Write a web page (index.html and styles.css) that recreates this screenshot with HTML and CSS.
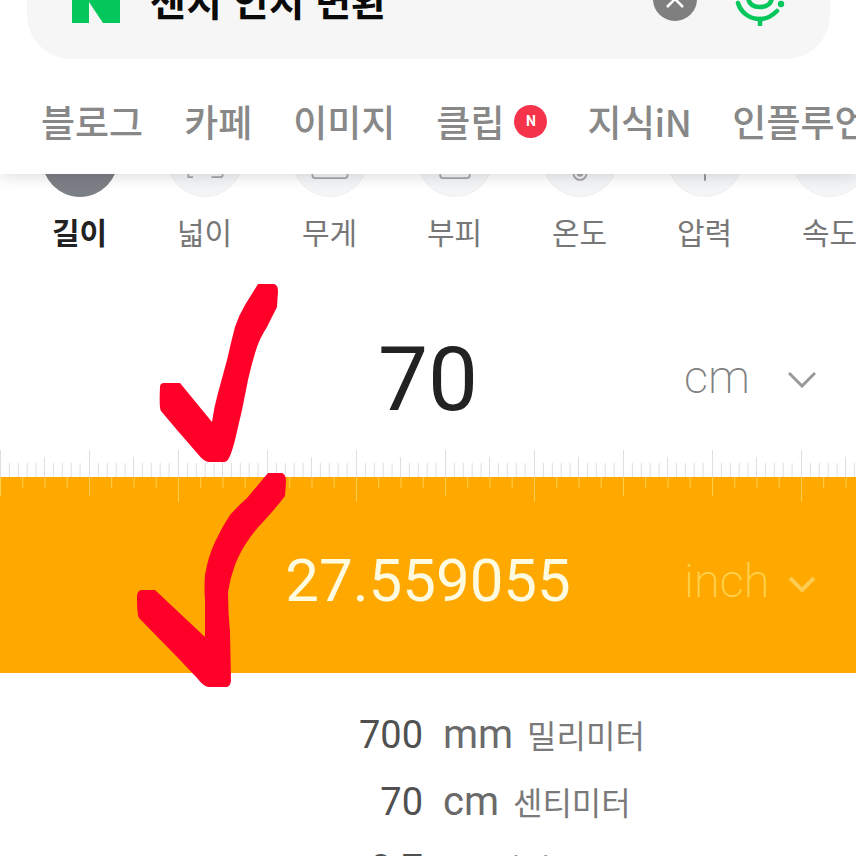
FILE: index.html
```html
<!DOCTYPE html>
<html lang="ko">
<head>
    <meta charset="UTF-8">
    <meta name="viewport" content="width=device-width, initial-scale=1.0">
    <title>센치 인치 변환</title>
    <link rel="stylesheet" href="styles.css">
</head>
<body>

<div class="page">
    <header class="header">
        <div class="search">
            <svg class="logo" viewBox="0 0 48 48"><path fill="#03c75a" d="M0 0h17l14 21V0h17v48H31L17 27v21H0z"/></svg>
            <span class="query">센치 인치 변환</span>
            <span class="clear">
                <svg viewBox="0 0 44 44"><path d="M22 22l-8 8M22 22l8 8M14 14l8 8 8-8" fill="none" stroke="#fff" stroke-width="2.5"/></svg>
            </span>
            <svg class="mic" viewBox="0 0 56 64">
                <g fill="none" stroke="#03c75a" stroke-width="4.5" stroke-linecap="round">
                    <path d="M16 36C17 42 21 45 28 45 35 45 39 42 40 36"/>
                    <path d="M6 41C9 51 18 57 28 57 34 57 40 54 45 49"/>
                    <path d="M28 57v6"/>
                </g>
                <circle cx="49" cy="42" r="3.2" fill="#03c75a"/>
            </svg>
        </div>
        <nav class="tabs">
            <span>블로그</span>
            <span>카페</span>
            <span>이미지</span>
            <span class="tab-clip">클립 <i class="badge">N</i></span>
            <span class="tab-kin">지식iN</span>
            <span>인플루언서</span>
        </nav>
    </header>

    <div class="kinds">
        <div class="kind active">
            <div class="thumb"><div class="circle"></div></div>
            <span>길이</span>
        </div>
        <div class="kind">
            <div class="thumb"><div class="circle">
                <svg viewBox="0 0 80 23"><path d="M22 0v3h5M47 3h10a2 2 0 0 0 2-2V0" fill="none" stroke="#a5a5a8" stroke-width="2"/></svg>
            </div></div>
            <span>넓이</span>
        </div>
        <div class="kind">
            <div class="thumb"><div class="circle">
                <svg viewBox="0 0 80 23"><path d="M21 0v1a3 3 0 0 0 3 3h32a3 3 0 0 0 3-3V0" fill="none" stroke="#a5a5a8" stroke-width="2"/></svg>
            </div></div>
            <span>무게</span>
        </div>
        <div class="kind">
            <div class="thumb"><div class="circle">
                <svg viewBox="0 0 80 23"><path d="M24 0v1a3 3 0 0 0 3 3h26a3 3 0 0 0 3-3V0" fill="none" stroke="#a5a5a8" stroke-width="2"/></svg>
            </div></div>
            <span>부피</span>
        </div>
        <div class="kind">
            <div class="thumb"><div class="circle">
                <svg viewBox="0 0 80 23"><circle cx="40" cy="-1" r="7" fill="none" stroke="#a5a5a8" stroke-width="2"/><circle cx="40" cy="-1" r="3.5" fill="#a5a5a8"/></svg>
            </div></div>
            <span>온도</span>
        </div>
        <div class="kind">
            <div class="thumb"><div class="circle">
                <svg viewBox="0 0 80 23"><path d="M40 0v7" fill="none" stroke="#8c8c8f" stroke-width="2"/></svg>
            </div></div>
            <span>압력</span>
        </div>
        <div class="kind">
            <div class="thumb"><div class="circle"></div></div>
            <span>속도</span>
        </div>
    </div>

    <section class="converter">
        <div class="value-row">
            <span class="value">70</span>
            <div class="unit">
                <span>cm</span>
                <svg class="chevron" viewBox="0 0 28 16"><path d="M1 1l13 13L27 1" fill="none" stroke="#999" stroke-width="3"/></svg>
            </div>
        </div>
        <svg class="ruler-top" width="856" height="27">
            <defs>
                <pattern id="topTicks" width="89" height="27" patternUnits="userSpaceOnUse">
                    <path d="M.5 0v27M44.5 7v20M9.4 13v14M18.3 13v14M27.2 13v14M36.1 13v14M53.4 13v14M62.3 13v14M71.2 13v14M80.1 13v14" fill="none" stroke="#dfdfdf"/>
                </pattern>
            </defs>
            <rect width="856" height="27" fill="url(#topTicks)"/>
        </svg>
        <div class="result-panel">
            <svg class="ruler-bottom" width="856" height="25">
                <defs>
                    <pattern id="bottomTicks" width="89" height="25" patternUnits="userSpaceOnUse">
                        <path d="M.5 0v19M22.7 0v11M45 0v11M67.2 0v11" fill="none" stroke="#ffcf4d"/>
                    </pattern>
                </defs>
                <rect width="856" height="25" fill="url(#bottomTicks)"/>
                <path d="M178.5 0v25M356.5 0v25M534.5 0v25M801.5 0v25" fill="none" stroke="#ffcf4d"/>
            </svg>
            <div class="value-row small">
                <span class="value">27.559055</span>
                <div class="unit">
                    <span>inch</span>
                    <svg class="chevron" viewBox="0 0 28 16"><path d="M2 2l12 12L26 2" fill="none" stroke="#ffcb4f" stroke-width="4"/></svg>
                </div>
            </div>
        </div>
    </section>

    <ul class="results">
        <li><b>700</b><span class="name"><em>mm</em> 밀리미터</span></li>
        <li><b>70</b><span class="name"><em>cm</em> 센티미터</span></li>
        <li><b>0.7</b><span class="name"><em>m</em> 미터</span></li>
    </ul>

    <svg class="marks" viewBox="0 0 856 856">
        <path d="M258 284H274Q278 285 278 291L277 307Q271 319 267 327 260 338 257 347 252 362 248 380L242 410 235 440Q232 452 229 458 227 462 224 462H209Q204 462 197 453L177 430 161 411Q159 408 160 387 160 383 164 383H180L212 422Q214 407 218 393L227 360Q231 342 235 327 239 315 245 305L258 284Z"/>
        <path d="M268 473H282Q286 474 286 482L285 496Q275 509 263 522 254 531 247 542 240 552 235 565 230 578 228 592 228 612 230 632L231 681Q230 687 226 687H209Q204 687 197 678L180 660 139 618Q137 615 137 597 137 590 142 590H155L205 637 205 600Q204 587 205 575 208 557 215 542 222 527 230 515 238 506 247 498L268 473Z"/>
    </svg>
</div>

</body>
</html>
```

FILE: styles.css
```css
html, body {
    margin: 0;
    height: 100%;
    overflow: hidden;
    background-color: #fff;
}

body {
    font-family: Roboto, "Noto Sans CJK KR", sans-serif;
}

.page {
    position: relative;
    width: 856px;
    height: 856px;
    overflow: hidden;
}

/* the top of the search bar is cut off by the screenshot */
.header {
    position: relative;
    z-index: 1;
    height: 235px;
    margin-top: -61px;
    background-color: #fff;
    box-shadow: 0 3px 14px rgba(0, 0, 0, 0.13);
}

.search {
    display: flex;
    align-items: center;
    box-sizing: border-box;
    width: 803px;
    height: 120px;
    margin-left: 27px;
    padding-left: 45px;
    background-color: #f6f6f7;
    border-radius: 44px;
}

.logo {
    width: 48px;
    height: 48px;
    flex-shrink: 0;
}

.query {
    margin-left: 30px;
    font-family: "Noto Sans CJK KR", sans-serif;
    font-size: 39px;
    font-weight: 700;
    color: #0a0a0a;
    flex: 1;
}

.clear {
    display: flex;
    width: 44px;
    height: 44px;
    border-radius: 50%;
    background-color: #7f7f7f;
}

.mic {
    width: 56px;
    height: 64px;
    margin: 0 42px 0 35px;
    position: relative;
    top: -5px;
}

.tabs {
    display: flex;
    align-items: center;
    gap: 41px;
    height: 115px;
    box-sizing: border-box;
    padding: 9px 0 0 41px;
    font-family: "Noto Sans CJK KR", sans-serif;
    font-size: 37px;
    font-weight: 500;
    color: #888;
    white-space: nowrap;
}

.tab-clip {
    display: flex;
    align-items: center;
    gap: 10px;
    margin-right: -1px;
}

.tab-kin {
    letter-spacing: -0.5px;
}

.badge {
    display: flex;
    justify-content: center;
    align-items: center;
    width: 33px;
    height: 33px;
    border-radius: 50%;
    background-color: #f5334a;
    color: #fff;
    font-family: Roboto, sans-serif;
    font-size: 14px;
    font-style: normal;
    font-weight: 700;
}

.kinds {
    display: flex;
    padding-left: 17px;
}

.kind {
    flex: 0 0 125px;
    text-align: center;
    font-family: "Noto Sans CJK KR", sans-serif;
    font-size: 30px;
    color: #777;
}

.kind span {
    display: block;
    margin-top: 13px;
    line-height: 42px;
}

.kind.active {
    color: #222;
    font-weight: 700;
}

.thumb {
    height: 23px;
    overflow: hidden;
}

.circle {
    display: flex;
    align-items: flex-end;
    box-sizing: border-box;
    width: 76px;
    height: 76px;
    margin: -53px auto 0;
    background-color: #f4f5f6;
    border: 1px solid #efefef;
    border-radius: 50%;
    overflow: hidden;
}

.circle svg {
    width: 74px;
    height: 22px;
}

.kind.active .circle {
    background-color: #7c7f86;
    border-color: #7c7f86;
}

.converter {
    margin-top: 54px;
}

.value-row {
    display: grid;
    grid-template-columns: 1fr 300px 1fr;
    align-items: center;
    height: 144px;
}

.value {
    grid-column: 2;
    text-align: center;
    font-size: 89px;
    color: #222;
    position: relative;
    top: 1px;
}

.unit {
    display: flex;
    justify-content: space-between;
    align-items: center;
    margin-left: 106px;
    padding-right: 40px;
    font-size: 47px;
    font-weight: 200;
    color: #808080;
}

.unit span {
    margin-bottom: 4px;
}

.chevron {
    width: 28px;
    height: 16px;
    margin-top: 4px;
}

.ruler-top,
.ruler-bottom {
    display: block;
}

.result-panel {
    height: 196px;
    background-color: #ffa800;
}

.value-row.small {
    height: 156px;
}

.value-row.small .value {
    top: 0;
    font-size: 60px;
    color: #fffbe0;
}

.value-row.small .unit {
    color: #ffd24d;
}

.value-row.small .unit span {
    margin-bottom: 0;
}

.value-row.small .chevron {
    margin-top: 8px;
}

.results {
    margin: 0;
    padding: 28px 0 0;
    list-style: none;
}

.results li {
    display: grid;
    grid-template-columns: 423px auto;
    column-gap: 20px;
    align-items: center;
    height: 67px;
}

.results b {
    text-align: right;
    font-size: 38px;
    font-weight: 400;
    color: #505050;
}

.name {
    font-size: 32px;
    color: #7a7a7a;
}

.name em {
    margin-right: 6px;
    font-size: 40px;
    font-style: normal;
    color: #6a6a6a;
}

.marks {
    position: absolute;
    top: 0;
    left: 0;
    z-index: 2;
    width: 856px;
    height: 856px;
    fill: #ff0028;
}
```
